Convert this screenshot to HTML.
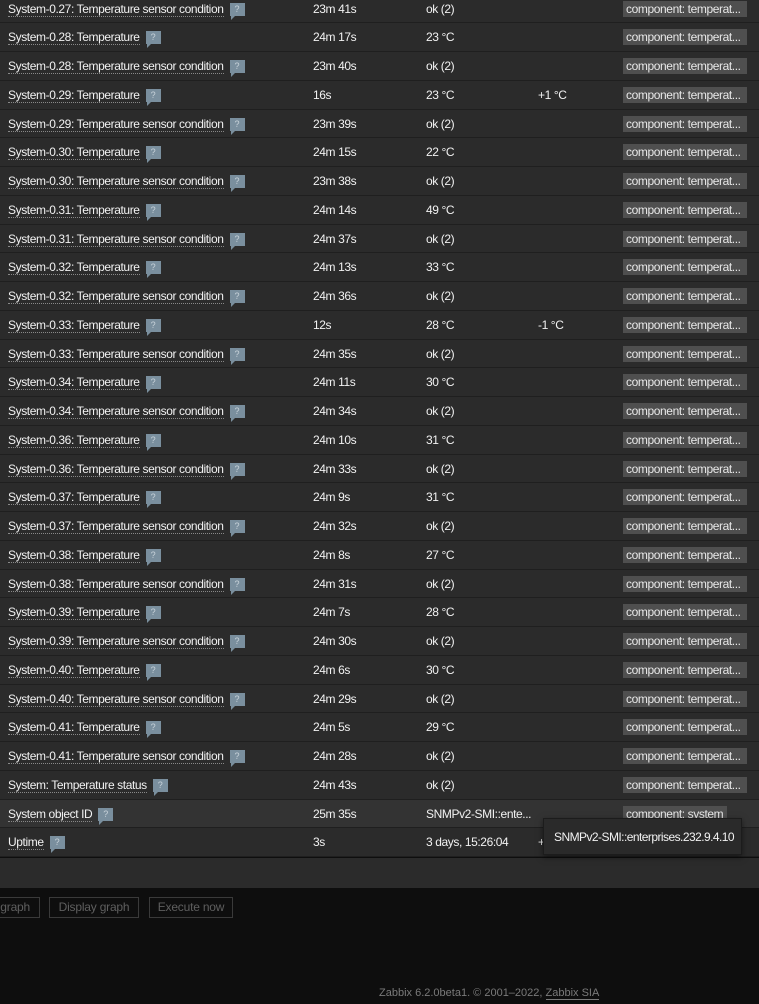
<!DOCTYPE html>
<html><head><meta charset="utf-8"><style>
body{margin:0;width:759px;height:1004px;background:#0e0e0e;overflow:hidden;font-family:"Liberation Sans",Arial,sans-serif;font-size:12px;letter-spacing:-0.4px;color:#f2f2f2;position:relative}
.tbl{position:absolute;left:0;top:-5.4px;width:759px;background:#2b2b2b}
.r{position:relative;height:28.76px;box-sizing:border-box;border-bottom:1px solid #1f1f1f}
.r.h{background:#333}
.r span{position:absolute;top:7px;white-space:nowrap}
.n{left:8px}
.n u{text-decoration:none;border-bottom:1px dotted #888}
.q{display:inline-block;position:relative;width:15px;height:13px;background:#7a8f9e;margin-left:6px;vertical-align:1px;color:#c9d3da;font-size:9px;text-align:center;line-height:13px;font-style:normal;letter-spacing:0}
.q:after{content:"";position:absolute;left:1px;bottom:-4px;border-left:4px solid #7a8f9e;border-bottom:4px solid transparent}
.c2{left:313px}.c3{left:426px}.c4{left:538px}
.t{left:623px!important;top:6px!important;width:124px;height:16px;background:#4f4f4f;color:#e8e8e8;line-height:16px;padding-left:3px;box-sizing:border-box;overflow:hidden}
.below{position:absolute;left:0;top:858px;width:759px;height:30px;background:#2b2b2b}
.btn{position:absolute;top:897px;height:21px;border:1px solid #3a3a3a;box-sizing:border-box;color:#5f5f5f;line-height:19px;text-align:center;letter-spacing:-0.2px}
.tip{position:absolute;left:543px;top:818px;width:199px;height:37px;background:#2a2a2a;border:1px solid #1c1c1c;box-shadow:0 2px 6px rgba(0,0,0,.5);box-sizing:border-box;padding:11px 0 0 10px;color:#f2f2f2;white-space:nowrap;letter-spacing:-0.55px}
.foot{position:absolute;top:987px;left:379px;color:#7a7a7a;font-size:11px;letter-spacing:0}
.foot u{text-decoration:none;border-bottom:1px solid #7a7a7a}
</style></head><body>
<div class="tbl">
<div class="r"><span class="n"><u>System-0.27: Temperature sensor condition</u><i class="q">?</i></span><span class="c2">23m 41s</span><span class="c3">ok (2)</span><span class="t">component: temperat...</span></div>
<div class="r"><span class="n"><u>System-0.28: Temperature</u><i class="q">?</i></span><span class="c2">24m 17s</span><span class="c3">23 °C</span><span class="t">component: temperat...</span></div>
<div class="r"><span class="n"><u>System-0.28: Temperature sensor condition</u><i class="q">?</i></span><span class="c2">23m 40s</span><span class="c3">ok (2)</span><span class="t">component: temperat...</span></div>
<div class="r"><span class="n"><u>System-0.29: Temperature</u><i class="q">?</i></span><span class="c2">16s</span><span class="c3">23 °C</span><span class="c4">+1 °C</span><span class="t">component: temperat...</span></div>
<div class="r"><span class="n"><u>System-0.29: Temperature sensor condition</u><i class="q">?</i></span><span class="c2">23m 39s</span><span class="c3">ok (2)</span><span class="t">component: temperat...</span></div>
<div class="r"><span class="n"><u>System-0.30: Temperature</u><i class="q">?</i></span><span class="c2">24m 15s</span><span class="c3">22 °C</span><span class="t">component: temperat...</span></div>
<div class="r"><span class="n"><u>System-0.30: Temperature sensor condition</u><i class="q">?</i></span><span class="c2">23m 38s</span><span class="c3">ok (2)</span><span class="t">component: temperat...</span></div>
<div class="r"><span class="n"><u>System-0.31: Temperature</u><i class="q">?</i></span><span class="c2">24m 14s</span><span class="c3">49 °C</span><span class="t">component: temperat...</span></div>
<div class="r"><span class="n"><u>System-0.31: Temperature sensor condition</u><i class="q">?</i></span><span class="c2">24m 37s</span><span class="c3">ok (2)</span><span class="t">component: temperat...</span></div>
<div class="r"><span class="n"><u>System-0.32: Temperature</u><i class="q">?</i></span><span class="c2">24m 13s</span><span class="c3">33 °C</span><span class="t">component: temperat...</span></div>
<div class="r"><span class="n"><u>System-0.32: Temperature sensor condition</u><i class="q">?</i></span><span class="c2">24m 36s</span><span class="c3">ok (2)</span><span class="t">component: temperat...</span></div>
<div class="r"><span class="n"><u>System-0.33: Temperature</u><i class="q">?</i></span><span class="c2">12s</span><span class="c3">28 °C</span><span class="c4">-1 °C</span><span class="t">component: temperat...</span></div>
<div class="r"><span class="n"><u>System-0.33: Temperature sensor condition</u><i class="q">?</i></span><span class="c2">24m 35s</span><span class="c3">ok (2)</span><span class="t">component: temperat...</span></div>
<div class="r"><span class="n"><u>System-0.34: Temperature</u><i class="q">?</i></span><span class="c2">24m 11s</span><span class="c3">30 °C</span><span class="t">component: temperat...</span></div>
<div class="r"><span class="n"><u>System-0.34: Temperature sensor condition</u><i class="q">?</i></span><span class="c2">24m 34s</span><span class="c3">ok (2)</span><span class="t">component: temperat...</span></div>
<div class="r"><span class="n"><u>System-0.36: Temperature</u><i class="q">?</i></span><span class="c2">24m 10s</span><span class="c3">31 °C</span><span class="t">component: temperat...</span></div>
<div class="r"><span class="n"><u>System-0.36: Temperature sensor condition</u><i class="q">?</i></span><span class="c2">24m 33s</span><span class="c3">ok (2)</span><span class="t">component: temperat...</span></div>
<div class="r"><span class="n"><u>System-0.37: Temperature</u><i class="q">?</i></span><span class="c2">24m 9s</span><span class="c3">31 °C</span><span class="t">component: temperat...</span></div>
<div class="r"><span class="n"><u>System-0.37: Temperature sensor condition</u><i class="q">?</i></span><span class="c2">24m 32s</span><span class="c3">ok (2)</span><span class="t">component: temperat...</span></div>
<div class="r"><span class="n"><u>System-0.38: Temperature</u><i class="q">?</i></span><span class="c2">24m 8s</span><span class="c3">27 °C</span><span class="t">component: temperat...</span></div>
<div class="r"><span class="n"><u>System-0.38: Temperature sensor condition</u><i class="q">?</i></span><span class="c2">24m 31s</span><span class="c3">ok (2)</span><span class="t">component: temperat...</span></div>
<div class="r"><span class="n"><u>System-0.39: Temperature</u><i class="q">?</i></span><span class="c2">24m 7s</span><span class="c3">28 °C</span><span class="t">component: temperat...</span></div>
<div class="r"><span class="n"><u>System-0.39: Temperature sensor condition</u><i class="q">?</i></span><span class="c2">24m 30s</span><span class="c3">ok (2)</span><span class="t">component: temperat...</span></div>
<div class="r"><span class="n"><u>System-0.40: Temperature</u><i class="q">?</i></span><span class="c2">24m 6s</span><span class="c3">30 °C</span><span class="t">component: temperat...</span></div>
<div class="r"><span class="n"><u>System-0.40: Temperature sensor condition</u><i class="q">?</i></span><span class="c2">24m 29s</span><span class="c3">ok (2)</span><span class="t">component: temperat...</span></div>
<div class="r"><span class="n"><u>System-0.41: Temperature</u><i class="q">?</i></span><span class="c2">24m 5s</span><span class="c3">29 °C</span><span class="t">component: temperat...</span></div>
<div class="r"><span class="n"><u>System-0.41: Temperature sensor condition</u><i class="q">?</i></span><span class="c2">24m 28s</span><span class="c3">ok (2)</span><span class="t">component: temperat...</span></div>
<div class="r"><span class="n"><u>System: Temperature status</u><i class="q">?</i></span><span class="c2">24m 43s</span><span class="c3">ok (2)</span><span class="t">component: temperat...</span></div>
<div class="r h"><span class="n"><u>System object ID</u><i class="q">?</i></span><span class="c2">25m 35s</span><span class="c3">SNMPv2-SMI::ente...</span><span class="t" style="width:104px">component: system</span></div>
<div class="r"><span class="n"><u>Uptime</u><i class="q">?</i></span><span class="c2">3s</span><span class="c3">3 days, 15:26:04</span><span class="c4">+</span></div>
</div>
<div class="below"></div>
<div class="tip">SNMPv2-SMI::enterprises.232.9.4.10</div>
<div class="btn" style="left:-20px;width:60px;text-align:right;padding-right:9px">graph</div>
<div class="btn" style="left:49px;width:90px">Display graph</div>
<div class="btn" style="left:149px;width:84px">Execute now</div>
<div class="foot">Zabbix 6.2.0beta1. © 2001–2022, <u>Zabbix SIA</u></div>
</body></html>
